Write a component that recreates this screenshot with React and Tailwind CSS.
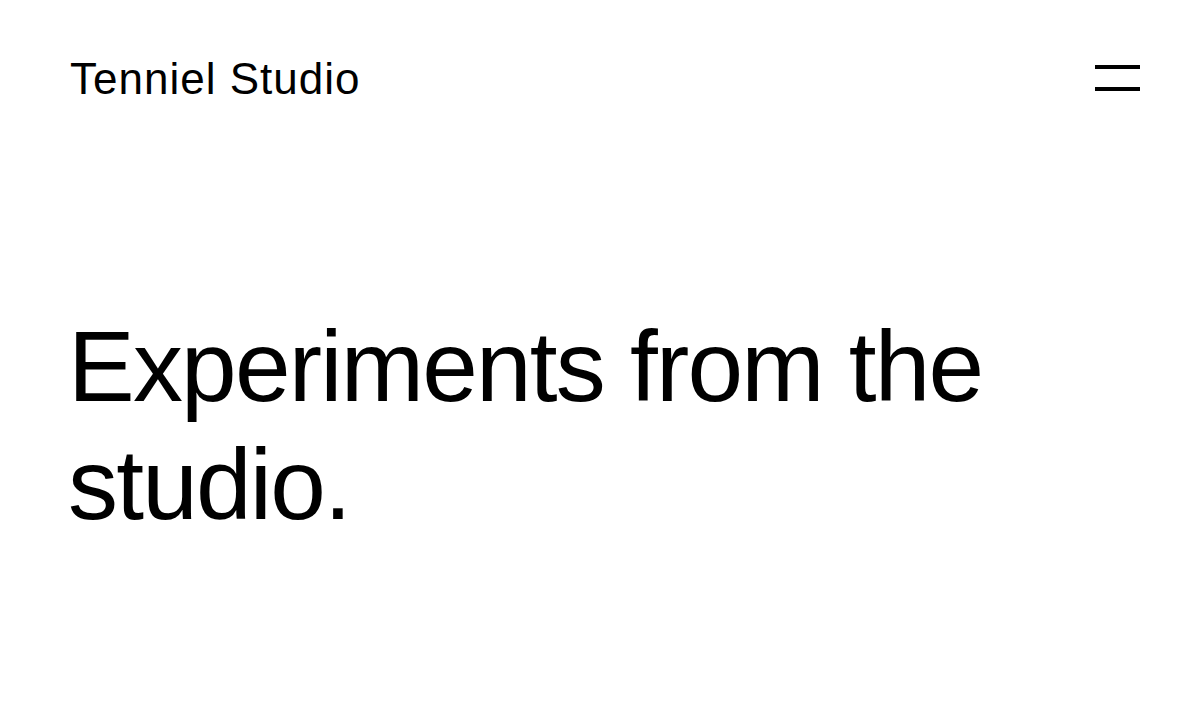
export default function App() {
  return (
    <div
      className="min-h-screen bg-white text-black"
      style={{ fontFamily: '"Liberation Sans", Arial, sans-serif' }}
    >
      <header className="flex items-start justify-between pl-[70px] pr-[60px] pt-[53px]">
        <a href="#" className="text-[44px] leading-[52px] tracking-[1px]">
          Tenniel Studio
        </a>
        {/* two-bar menu toggle */}
        <button aria-label="Menu" className="mt-[12px] flex w-[45px] flex-col gap-[18px]">
          <span className="block h-[4px] w-full bg-black" />
          <span className="block h-[4px] w-full bg-black" />
        </button>
      </header>

      <main className="px-[68px] pt-[202px]">
        <h1 className="max-w-[960px] text-[100px] leading-[118px] tracking-[-1.8px]">
          Experiments from the studio.
        </h1>
      </main>
    </div>
  );
}
